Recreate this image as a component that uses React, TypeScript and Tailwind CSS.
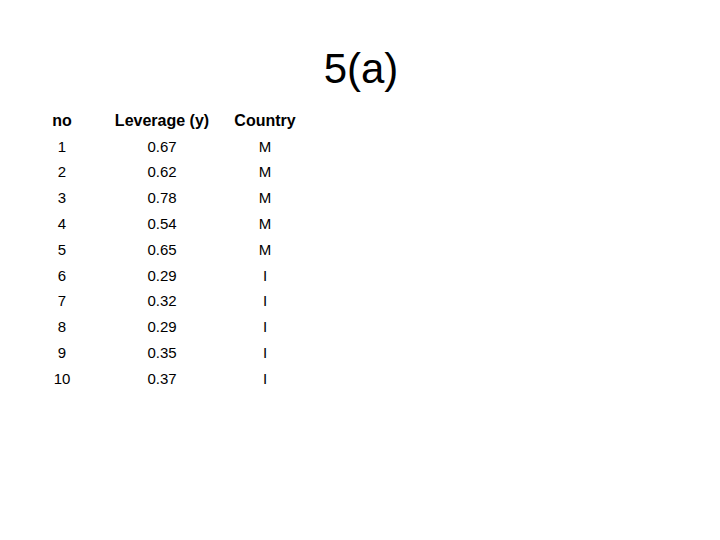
import React from "react";

const rows: [string, string, string][] = [
  ["1", "0.67", "M"],
  ["2", "0.62", "M"],
  ["3", "0.78", "M"],
  ["4", "0.54", "M"],
  ["5", "0.65", "M"],
  ["6", "0.29", "I"],
  ["7", "0.32", "I"],
  ["8", "0.29", "I"],
  ["9", "0.35", "I"],
  ["10", "0.37", "I"],
];

export default function App() {
  return (
    <div
      className="w-[720px] h-[540px] bg-white text-black overflow-hidden"
      style={{ fontFamily: '"Liberation Sans", Arial, sans-serif' }}
    >
      <div className="pt-[48px] flex justify-center">
        <h1 className="text-[42px] leading-[42px] font-normal pl-[2px]">5(a)</h1>
      </div>
      <div className="mt-[17px] pl-[32px]">
        <div className="grid grid-cols-[60px_140px_66px] h-[27px] items-center text-[16px] font-bold">
          <div className="text-center">no</div>
          <div className="text-center">Leverage (y)</div>
          <div className="text-center">Country</div>
        </div>
        {rows.map((r) => (
          <div
            key={r[0]}
            className="grid grid-cols-[60px_140px_66px] h-[25.8px] items-center text-[15px]"
          >
            <div className="text-center">{r[0]}</div>
            <div className="text-center">{r[1]}</div>
            <div className="text-center">{r[2]}</div>
          </div>
        ))}
      </div>
    </div>
  );
}
